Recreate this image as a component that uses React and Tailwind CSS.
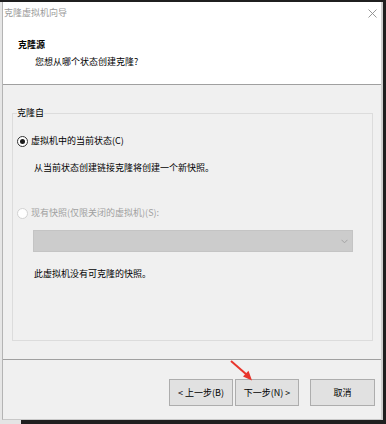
import React from "react";

const font = "font-['Noto_Sans_CJK_SC','Microsoft_YaHei',sans-serif]";

const Radio = ({ checked, disabled }) => (
  <span
    className={`flex h-[11px] w-[11px] items-center justify-center rounded-full border bg-white ${
      disabled ? "border-[#d2d2d2]" : "border-[#333333]"
    }`}
  >
    {checked && <span className="h-[5px] w-[5px] rounded-full bg-[#1a1a1a]" />}
  </span>
);

const WizardButton = ({ children, className = "" }) => (
  <button
    type="button"
    className={`flex h-[27px] items-center justify-center border border-[#adadad] bg-[#e1e1e1] text-[9px] leading-[12px] text-black ${className}`}
  >
    {children}
  </button>
);

const App = () => {
  return (
    <div className={`relative flex h-[424px] w-[386px] flex-col bg-[#1f1f1f] pt-[2px] ${font}`}>
      <div className="flex h-[418px] w-[383px] bg-[#e6e6e6] pl-[2px]">
        <div className="flex flex-1 flex-col border-l border-r-2 border-b border-l-[#b4b4b4] border-r-[#cfcfcf] border-b-[#c8c8c8] bg-[#f0f0f0]">
          {/* title + header */}
          <div className="bg-white border-b border-[#a0a0a0]">
            <div className="flex h-[22px] items-center justify-between pl-[1px] pr-[4px]">
              <span className="text-[9px] leading-[12px] text-[#9a9a9a]">克隆虚拟机向导</span>
              <svg width="9" height="9" viewBox="0 0 9 9">
                <path d="M0.5 0.5 L8.5 8.5 M8.5 0.5 L0.5 8.5" stroke="#8c8c8c" strokeWidth="0.9" fill="none" />
              </svg>
            </div>
            <div className="pt-[15px] pb-[16px]">
              <div className="pl-[15px] text-[9px] font-bold leading-[12px] text-black">克隆源</div>
              <div className="mt-[5px] pl-[32px] text-[9px] leading-[12px] text-black">您想从哪个状态创建克隆?</div>
            </div>
          </div>

          {/* body */}
          <fieldset className="ml-[9px] mt-[22px] h-[234px] w-[361px] border border-[#dcdcdc] px-[4px]">
            <legend className="text-[9px] leading-[12px] text-black">克隆自</legend>
            <div className="pt-[16px]">
              <label className="flex items-center gap-[3px] text-[9px] leading-[12px] text-black">
                <Radio checked />
                虚拟机中的当前状态(C)
              </label>
              <p className="mt-[15px] pl-[17px] text-[9px] leading-[12px] text-black">
                从当前状态创建链接克隆将创建一个新快照。
              </p>
              <label className="mt-[33px] flex items-center gap-[3px] text-[9px] leading-[12px] text-[#a0a0a0]">
                <Radio disabled />
                现有快照(仅限关闭的虚拟机)(S):
              </label>
              <div className="ml-[16px] mt-[11px] flex h-[22px] w-[320px] items-center justify-end border border-[#c4c4c4] bg-[#cccccc] pr-[4px]">
                <svg width="7" height="5" viewBox="0 0 7 5">
                  <path d="M0.5 0.8 L3.5 3.8 L6.5 0.8" stroke="#a3a3a3" strokeWidth="1" fill="none" />
                </svg>
              </div>
              <p className="mt-[16px] pl-[17px] text-[9px] leading-[12px] text-black">
                此虚拟机没有可克隆的快照。
              </p>
            </div>
          </fieldset>

          {/* footer */}
          <div className="mt-[18px] flex flex-1 items-start justify-end border-t border-[#a0a0a0] pt-[19px] pr-[6px]">
            <WizardButton className="w-[64px]">&lt; 上一步(B)</WizardButton>
            <WizardButton className="ml-[2px] w-[64px]">下一步(N) &gt;</WizardButton>
            <WizardButton className="ml-[11px] w-[65px]">取消</WizardButton>
          </div>
        </div>
      </div>
      <div className="flex h-[4px]">
        <div className="w-[21px] bg-[#e4e4e4]" />
        <div className="flex-1" />
      </div>

      {/* red annotation arrow */}
      <svg className="absolute left-0 top-0" width="386" height="424" viewBox="0 0 386 424">
        <line x1="231" y1="361" x2="246.5" y2="374.5" stroke="#e8352c" strokeWidth="2" />
        <polygon points="252,380.5 243,376.5 248.5,370.8" fill="#e8352c" />
      </svg>
    </div>
  );
};

export default App;
